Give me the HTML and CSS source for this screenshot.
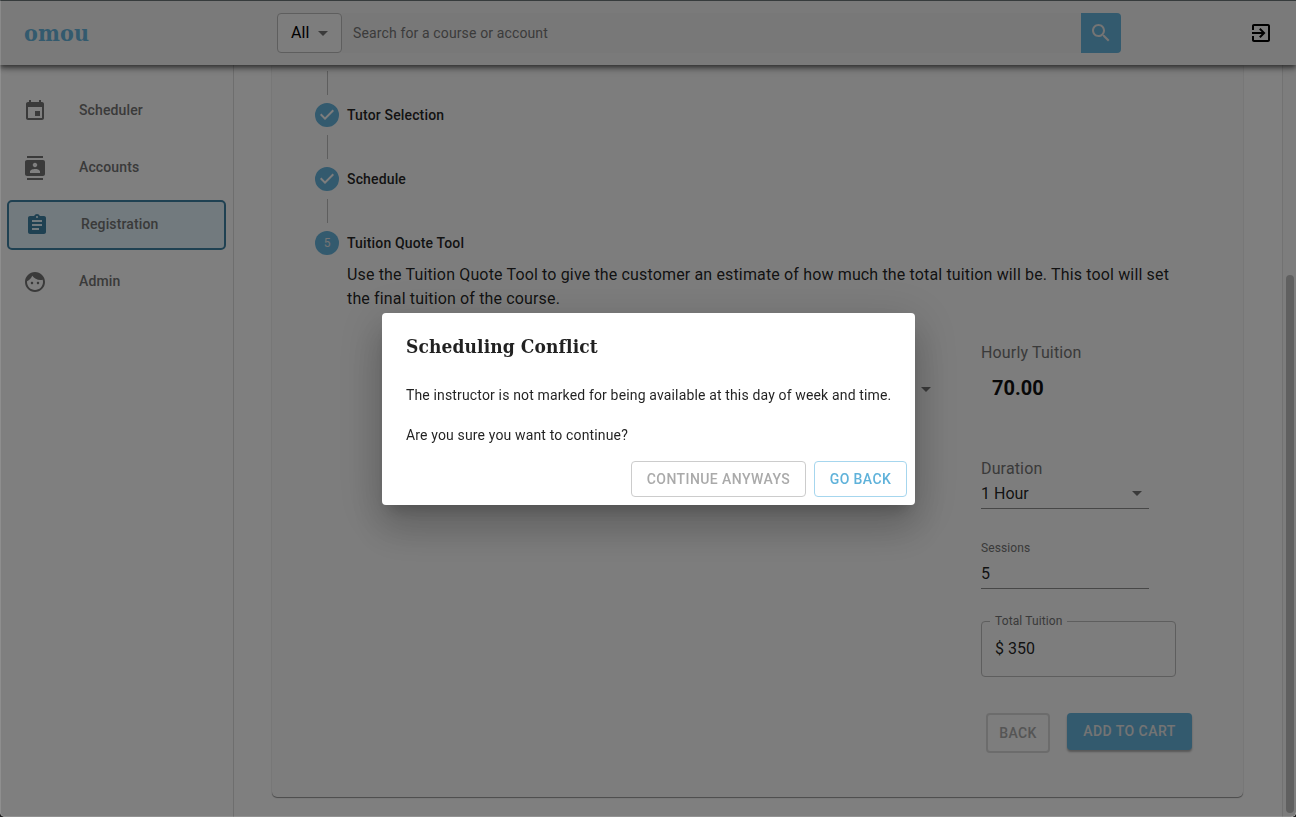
FILE: index.html
```
<!DOCTYPE html>
<html lang="en">
<head>
<meta charset="utf-8">
<title>omou</title>
<link rel="stylesheet" href="styles.css">
</head>
<body>
<div class="app">
  <header class="topbar">
    <div class="logo">omou</div>
    <div class="search">
      <div class="filter"><span>All</span><i class="caret"></i></div>
      <div class="query"><span>Search for a course or account</span></div>
      <div class="search-btn"><svg class="i24" viewBox="0 0 24 24"><path d="M15.5 14h-.79l-.28-.27C15.41 12.59 16 11.11 16 9.5 16 5.91 13.09 3 9.5 3S3 5.91 3 9.5 5.91 16 9.5 16c1.61 0 3.09-.59 4.23-1.57l.27.28v.79l5 4.99L20.49 19l-4.99-5zm-6 0C7.01 14 5 11.99 5 9.5S7.01 5 9.5 5 14 7.01 14 9.5 11.99 14 9.5 14z"/></svg></div>
    </div>
    <svg class="logout" viewBox="0 0 24 24"><path d="M10.09 15.59L11.5 17l5-5-5-5-1.41 1.41L12.67 11H3v2h9.67l-2.58 2.59zM19 3H5c-1.11 0-2 .9-2 2v4h2V5h14v14H5v-4H3v4c0 1.1.89 2 2 2h14c1.1 0 2-.9 2-2V5c0-1.1-.9-2-2-2z"/></svg>
  </header>
  <div class="body">
    <nav class="sidebar">
      <div class="nav-item"><svg class="i24" viewBox="0 0 24 24"><path d="M17 12h-5v5h5v-5zM16 1v2H8V1H6v2H5c-1.11 0-1.99.9-1.99 2L3 19c0 1.1.89 2 2 2h14c1.1 0 2-.9 2-2V5c0-1.1-.9-2-2-2h-1V1h-2zm3 18H5V8h14v11z"/></svg><span>Scheduler</span></div>
      <div class="nav-item"><svg class="i24" viewBox="0 0 24 24"><path d="M20 0H4v2h16V0zM4 24h16v-2H4v2zM20 4H4c-1.1 0-2 .9-2 2v12c0 1.1.9 2 2 2h16c1.1 0 2-.9 2-2V6c0-1.1-.9-2-2-2zm-8 2.75c1.24 0 2.25 1.01 2.25 2.25s-1.01 2.25-2.25 2.25S9.75 10.24 9.75 9 10.76 6.75 12 6.75zM17 17H7v-1.5c0-1.67 3.33-2.5 5-2.5s5 .83 5 2.5V17z"/></svg><span>Accounts</span></div>
      <div class="nav-item active"><svg class="i24" viewBox="0 0 24 24"><path d="M19 3h-4.18C14.4 1.84 13.3 1 12 1c-1.3 0-2.4.84-2.82 2H5c-1.1 0-2 .9-2 2v14c0 1.1.9 2 2 2h14c1.1 0 2-.9 2-2V5c0-1.1-.9-2-2-2zm-7 0c.55 0 1 .45 1 1s-.45 1-1 1-1-.45-1-1 .45-1 1-1zm2 14H7v-2h7v2zm3-4H7v-2h10v2zm0-4H7V7h10v2z"/></svg><span>Registration</span></div>
      <div class="nav-item"><svg class="i24" viewBox="0 0 24 24"><path d="M9 11.75c-.69 0-1.25.56-1.25 1.25s.56 1.25 1.25 1.25 1.25-.56 1.25-1.25-.56-1.25-1.25-1.25zm6 0c-.69 0-1.25.56-1.25 1.25s.56 1.25 1.25 1.25 1.25-.56 1.25-1.25-.56-1.25-1.25-1.25zM12 2C6.48 2 2 6.48 2 12s4.48 10 10 10 10-4.48 10-10S17.52 2 12 2zm0 18c-4.41 0-8-3.59-8-8 0-.29.02-.58.05-.86 2.36-1.05 4.23-2.98 5.21-5.37C11.07 8.33 14.05 10 17.42 10c.78 0 1.53-.09 2.25-.26.21.71.33 1.47.33 2.26 0 4.41-3.59 8-8 8z"/></svg><span>Admin</span></div>
    </nav>
    <main class="content">
      <section class="card">
        <div class="connector"></div>
        <div class="step"><svg class="check" viewBox="0 0 24 24"><path d="M12 0a12 12 0 1 0 0 24a12 12 0 0 0 0-24zm-2 17l-5-5 1.4-1.4 3.6 3.6 7.6-7.6L19 8l-9 9z"/></svg><span>Tutor Selection</span></div>
        <div class="connector"></div>
        <div class="step"><svg class="check" viewBox="0 0 24 24"><path d="M12 0a12 12 0 1 0 0 24a12 12 0 0 0 0-24zm-2 17l-5-5 1.4-1.4 3.6 3.6 7.6-7.6L19 8l-9 9z"/></svg><span>Schedule</span></div>
        <div class="connector"></div>
        <div class="step"><span class="dot">5</span><span>Tuition Quote Tool</span></div>
        <div class="step-body">
          <p class="intro">Use the Tuition Quote Tool to give the customer an estimate of how much the total tuition will be. This tool will set<br>the final tuition of the course.</p>
          <div class="quote">
            <div class="category"><i class="caret"></i></div>
            <div class="fields">
              <div class="label">Hourly Tuition</div>
              <div class="rate">70.00</div>
              <div class="label duration">Duration</div>
              <div class="input"><span>1 Hour</span><i class="caret"></i></div>
              <div class="label small">Sessions</div>
              <div class="input sessions"><span>5</span></div>
              <fieldset class="total"><legend>Total Tuition</legend><span>$ 350</span></fieldset>
              <div class="actions"><div class="btn-back">BACK</div><div class="btn-add">ADD TO CART</div></div>
            </div>
          </div>
        </div>
      </section>
    </main>
    <div class="scroll"><div class="thumb"></div></div>
  </div>
</div>
<div class="overlay">
  <div class="dialog" role="dialog">
    <h2>Scheduling Conflict</h2>
    <div class="dialog-text">The instructor is not marked for being available at this day of week and time.<br><br>Are you sure you want to continue?</div>
    <div class="dialog-actions"><button class="btn cont">CONTINUE ANYWAYS</button><button class="btn goback">GO BACK</button></div>
  </div>
</div>
</body>
</html>
```
FILE: styles.css
```
* { box-sizing: border-box; }
body { margin: 0; background: #222; font: 16px/24px Roboto, sans-serif; color: rgba(0,0,0,.87); }
svg { fill: currentColor; display: block; flex: none; }
.i24 { width: 24px; height: 24px; }
.app { height: 817px; display: flex; flex-direction: column; overflow: hidden; background: #fff; border-top: 1px solid #6c7678; border-radius: 0 0 5px 5px; }
.topbar { height: 64px; flex: none; display: flex; align-items: center; background: #f5f5f5; position: relative; z-index: 1; padding: 0 23px 0 24px;
  box-shadow: 0 2px 4px -1px rgba(0,0,0,.4), 0 4px 5px rgba(0,0,0,.28), 0 1px 10px rgba(0,0,0,.24); }
.logo { width: 253px; font: bold 23px/32px "Roboto Slab", "DejaVu Serif Condensed", "DejaVu Serif", serif; font-stretch: condensed; color: #66b4dc; letter-spacing: .2px; }
.search { display: flex; width: 844px; height: 40px; }
.filter { width: 65px; border: 1px solid #bdbdbd; border-radius: 4px; background: #fafafa; display: flex; align-items: center; justify-content: space-between; padding: 0 13px; color: #000; letter-spacing: .1px; }
.caret { display: block; border: 5px solid transparent; border-top-color: #757575; border-bottom: 0; }
.query { flex: 1; background: #f0f0f0; padding: 0 11px; display: flex; align-items: center; font-size: 14px; letter-spacing: .13px; color: #777; }
.search-btn { width: 40px; background: #66b4dc; border-radius: 0 4px 4px 0; color: #e8e8e8; display: flex; align-items: center; justify-content: center; }
.logout { width: 24px; height: 24px; margin-left: auto; color: #000; }
.body { flex: 1; display: flex; min-height: 0; }
.sidebar { width: 234px; border-right: 1px solid #dcdcdc; padding: 21px 7px 0; display: flex; flex-direction: column; gap: 7px; }
.nav-item { height: 50px; display: flex; align-items: center; gap: 32px; padding: 0 16px 2px; font-size: 14px; font-weight: 500; letter-spacing: .13px; color: #757575; }
.nav-item svg { position: relative; top: 1px; }
.nav-item.active { border: 2px solid #3f82a4; border-radius: 5px; background: #e4f5fc; }
.active svg { color: #3f82a4; }
.content { flex: 1; padding: 0 39px 19px 38px; }
.card { height: 732px; background: #fafafa; border-radius: 0 0 5px 5px; box-shadow: 0 1px 1px rgba(0,0,0,.4), 0 0 1px rgba(0,0,0,.25); padding: 6px 43px 0; }
.connector { height: 24px; width: 1px; background: #bdbdbd; margin: 0 0 8px 12px; }
.step { height: 24px; display: flex; align-items: center; gap: 8px; font-size: 14px; font-weight: 500; letter-spacing: .15px; margin-bottom: 8px; }
.check { width: 24px; height: 24px; color: #66b4dc; }
.dot { width: 24px; height: 24px; border-radius: 50%; background: #66b4dc; color: #e8e8e8; display: flex; align-items: center; justify-content: center; font-size: 12px; font-weight: 400; letter-spacing: 0; }
.step-body { padding-left: 32px; }
.intro { margin: 0; letter-spacing: .15px; white-space: nowrap; }
.quote { display: flex; justify-content: space-between; padding-top: 30px; width: 845px; }
.category { width: 584px; height: 96px; display: flex; align-items: center; justify-content: flex-end; }
.fields { width: 211px; }
.label { color: #757575; letter-spacing: .15px; }
.rate { font-size: 20px; font-weight: 700; line-height: 24px; padding: 11px 0 0 11px; color: #111; }
.duration { margin-top: 57px; }
.input { width: 168px; height: 28px; border-bottom: 1px solid #8e8e8e; display: flex; align-items: center; justify-content: space-between; padding: 0 7px 2px 0; }
.label.small { font-size: 12px; line-height: 16px; margin-top: 31px; letter-spacing: .11px; }
.input.sessions { height: 33px; padding: 3px 7px 0 0; }
.total { width: 195px; height: 64px; margin: 24px 0 0; padding: 0 13px; border: 1px solid #bdbdbd; border-radius: 4px; min-width: 0; }
.total legend { font-size: 12px; line-height: 16px; padding: 0 5px; margin-left: -5px; color: #757575; letter-spacing: .11px; }
.total span { display: block; padding-top: 8px; }
.actions { display: flex; align-items: flex-start; gap: 17px; padding: 36px 0 0 5px; font-size: 14px; font-weight: 500; }
.btn-back { width: 64px; height: 40px; line-height: 36px; border: 2px solid #d8d8d8; border-radius: 4px; text-align: center; color: #aaa; letter-spacing: .4px; }
.btn-add { width: 125px; height: 37px; line-height: 37px; background: #66b4dc; border-radius: 4px; text-align: center; color: #e8e8e8; letter-spacing: .45px; box-shadow: 0 2px 2px rgba(0,0,0,.3); }
.scroll { width: 14px; border-left: 1px solid #e5e5e5; background: #fafafa; padding: 210px 2px 0 3px; }
.thumb { width: 8px; height: 538px; border-radius: 4px; background: #c1c1c1; }
.overlay { position: fixed; inset: 0; z-index: 10; background: rgba(0,0,0,.5); border-radius: 0 0 5px 5px; display: flex; align-items: center; justify-content: center; padding-top: 2px; border-left: 1px solid rgba(255,255,255,.12); border-bottom: 1px solid rgba(255,255,255,.15); }
.dialog { width: 533px; height: 192px; background: #fff; border-radius: 4px; box-shadow: 0 11px 15px -7px rgba(0,0,0,.2), 0 24px 38px 3px rgba(0,0,0,.14), 0 9px 46px 8px rgba(0,0,0,.12); }
.dialog h2 { margin: 0; padding: 17px 24px 15px; font: bold 19px/32px "Roboto Slab", "DejaVu Serif Condensed", "DejaVu Serif", serif; font-stretch: condensed; white-space: nowrap; letter-spacing: .1px; }
.dialog-text { padding: 8px 24px; font-size: 14px; line-height: 20px; letter-spacing: .15px; white-space: nowrap; }
.dialog-actions { padding: 8px; display: flex; justify-content: flex-end; gap: 8px; }
.btn { height: 36px; padding: 0; border-radius: 4px; background: #fff; font: 500 14px/24px Roboto, sans-serif; letter-spacing: .42px; }
.cont { width: 175px; border: 1px solid #ccc; color: #aaa; }
.goback { width: 93px; border: 1px solid #a6d6ee; color: #5fb2da; }
```
